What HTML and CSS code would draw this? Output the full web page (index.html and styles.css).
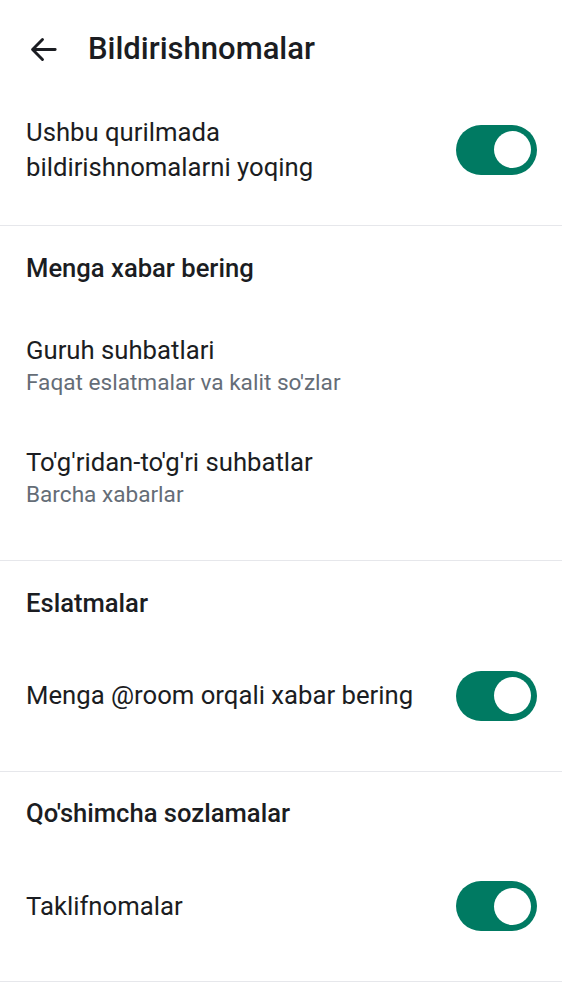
FILE: index.html
```html
<!DOCTYPE html>
<html lang="uz">
<head>
<meta charset="utf-8">
<title>Bildirishnomalar</title>
<link rel="stylesheet" href="styles.css">
</head>
<body>
<div class="screen">
  <header class="header">
    <svg class="back" viewBox="0 0 24 24" width="35" height="35" aria-hidden="true">
      <path d="M20 12H4.6M11.3 5.2L4.5 12l6.8 6.8" fill="none" stroke="#1b1d22" stroke-width="2" stroke-linecap="round" stroke-linejoin="round"/>
    </svg>
    <h1 class="title">Bildirishnomalar</h1>
  </header>

  <section class="section first">
    <div class="row row-main">
      <div class="text">
        <div class="label">Ushbu qurilmada<br>bildirishnomalarni yoqing</div>
      </div>
      <span class="switch"><span class="knob"></span></span>
    </div>
  </section>

  <section class="section two">
    <h2 class="heading">Menga xabar bering</h2>
    <div class="row row-two">
      <div class="text">
        <div class="label">Guruh suhbatlari</div>
        <div class="sub">Faqat eslatmalar va kalit so'zlar</div>
      </div>
    </div>
    <div class="row row-two">
      <div class="text">
        <div class="label">To'g'ridan-to'g'ri suhbatlar</div>
        <div class="sub">Barcha xabarlar</div>
      </div>
    </div>
  </section>

  <section class="section">
    <h2 class="heading">Eslatmalar</h2>
    <div class="row row-toggle">
      <div class="text">
        <div class="label">Menga @room orqali xabar bering</div>
      </div>
      <span class="switch"><span class="knob"></span></span>
    </div>
  </section>

  <section class="section">
    <h2 class="heading">Qo'shimcha sozlamalar</h2>
    <div class="row row-toggle">
      <div class="text">
        <div class="label">Taklifnomalar</div>
      </div>
      <span class="switch"><span class="knob"></span></span>
    </div>
  </section>
</div>
</body>
</html>
```

FILE: styles.css
```css
* {
  box-sizing: border-box;
}

html, body {
  margin: 0;
  padding: 0;
  background: #ffffff;
}

body {
  font-family: Roboto, "Noto Sans", "Liberation Sans", sans-serif;
  color: #1b1d22;
  width: 562px;
  overflow: hidden;
}

.screen {
  display: flex;
  flex-direction: column;
}

.header {
  height: 98px;
  display: flex;
  align-items: center;
  padding-left: 26px;
  gap: 27px;
}

.back {
  display: block;
  flex: none;
}

.title {
  margin: 0;
  font-size: 31px;
  font-weight: 500;
  line-height: 38px;
  letter-spacing: 0;
}

.section {
  border-bottom: 1px solid #e6e7eb;
}

.section.two {
  padding-bottom: 26px;
}

.heading {
  margin: 0;
  padding: 24.5px 26px 23.5px;
  font-size: 25.6px;
  font-weight: 500;
  line-height: 35px;
}

.row {
  display: flex;
  align-items: center;
  padding-left: 26px;
  padding-right: 25px;
  gap: 16px;
}

.row-main {
  padding-top: 16.5px;
  padding-bottom: 40.5px;
}

.row-two {
  padding-top: 23.75px;
  padding-bottom: 23.75px;
}

.row-toggle {
  padding-top: 26.5px;
  padding-bottom: 50px;
}

.text {
  flex: 1;
  min-width: 0;
}

.label {
  font-size: 25.7px;
  line-height: 35px;
}

.sub {
  font-size: 22.6px;
  line-height: 30px;
  color: #656d77;
}

.switch {
  flex: none;
  width: 81px;
  height: 50px;
  border-radius: 25px;
  background: #007a62;
  display: flex;
  align-items: center;
  justify-content: flex-end;
  padding-right: 6px;
}

.knob {
  width: 37px;
  height: 37px;
  border-radius: 50%;
  background: #ffffff;
}
```
